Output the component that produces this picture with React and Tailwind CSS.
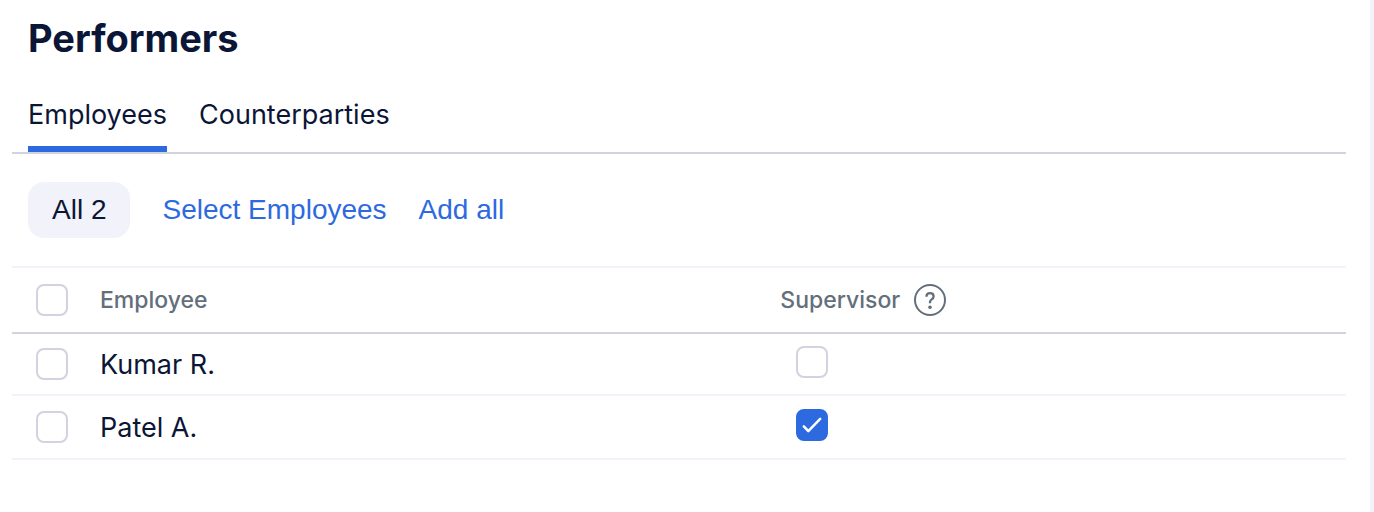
import { useState } from "react";

const EMPLOYEES = [
  { id: 1, name: "Kumar R.", supervisor: false },
  { id: 2, name: "Patel A.", supervisor: true },
];

const TABS = ["Employees", "Counterparties"];

function Checkbox({ label, checked, onChange }) {
  return (
    <span className="grid size-8 place-items-center">
      <input
        type="checkbox"
        aria-label={label}
        checked={checked}
        onChange={(e) => onChange(e.target.checked)}
        className="peer col-start-1 row-start-1 size-8 appearance-none rounded-lg border-2 border-[#d1d4e0] bg-white checked:border-[#2d6ae0] checked:bg-[#2d6ae0]"
      />
      <svg
        viewBox="0 0 32 32"
        className="pointer-events-none invisible col-start-1 row-start-1 size-8 peer-checked:visible"
        fill="none"
        stroke="white"
        strokeWidth="2.5"
        strokeLinecap="round"
        strokeLinejoin="round"
      >
        <path d="M7.8 17.3 12.3 22.1 24.2 9.8" />
      </svg>
    </span>
  );
}

export default function App() {
  const [tab, setTab] = useState("Employees");
  const [rows, setRows] = useState(EMPLOYEES);
  const [selected, setSelected] = useState([]);

  const toggleRow = (id, on) =>
    setSelected((prev) => (on ? [...prev, id] : prev.filter((x) => x !== id)));

  const setSupervisor = (id, on) =>
    setRows((prev) => prev.map((r) => (r.id === id ? { ...r, supervisor: on } : r)));

  return (
    <main className="min-h-screen border-r-4 border-[#f2f3fa] bg-white pt-4 pr-6 pl-3 font-['Inter',sans-serif] text-[#0b1637]">
      <h1 className="px-4 text-[38px] leading-11 font-bold">Performers</h1>

      <div role="tablist" className="mt-6 flex gap-8 border-b-2 border-[#d1d4e0] px-4 text-[27px]">
        {TABS.map((t) => (
          <button
            key={t}
            role="tab"
            aria-selected={tab === t}
            onClick={() => setTab(t)}
            className="h-17 border-b-6 border-transparent leading-15 aria-selected:border-[#2d6ae0]"
          >
            {t}
          </button>
        ))}
      </div>

      <div className="flex items-center gap-8 px-4 py-7 font-['Liberation_Sans',sans-serif] text-[28px]">
        <button className="h-14 rounded-2xl bg-[#f2f3fa] px-6">All {rows.length}</button>
        <button className="text-[#2d6ae0]">Select Employees</button>
        <button className="text-[#2d6ae0]">Add all</button>
      </div>

      <table className="w-full table-fixed border-separate border-spacing-0 border-t-2 border-[#f2f3fa] text-left">
        <thead className="text-[23px] text-[#636f7b]">
          <tr className="h-[66px]">
            <th className="w-22 border-b-2 border-[#d1d4e0] pl-6">
              <Checkbox
                label="Select all employees"
                checked={selected.length === rows.length}
                onChange={(on) => setSelected(on ? rows.map((r) => r.id) : [])}
              />
            </th>
            <th className="w-[51%] border-b-2 border-[#d1d4e0] font-medium">Employee</th>
            <th className="border-b-2 border-[#d1d4e0] font-medium">
              <div className="flex items-center gap-3.5">
                Supervisor
                <button aria-label="About supervisors">
                  <svg viewBox="0 0 32 32" className="size-8" fill="none" stroke="currentColor" strokeWidth="2">
                    <circle cx="16" cy="16" r="15" />
                    <path
                      d="M12.4 12.7c0-2.2 1.5-3.6 3.6-3.6s3.6 1.4 3.6 3.3c0 1.6-.9 2.3-1.9 3-1.1.8-1.7 1.3-1.7 2.6v1.2"
                      strokeWidth="2.3"
                    />
                    <circle cx="16" cy="23.2" r="1.8" fill="currentColor" stroke="none" />
                  </svg>
                </button>
              </div>
            </th>
          </tr>
        </thead>
        <tbody className="text-[27px]">
          {rows.map((r) => (
            <tr key={r.id} className="h-16 first:h-[62px]">
              <td className="border-b-2 border-[#f2f3fa] pl-6">
                <Checkbox
                  label={`Select ${r.name}`}
                  checked={selected.includes(r.id)}
                  onChange={(on) => toggleRow(r.id, on)}
                />
              </td>
              <td className="border-b-2 border-[#f2f3fa] pt-0.5">{r.name}</td>
              <td className="border-b-2 border-[#f2f3fa] pb-1 pl-4">
                <Checkbox
                  label={`${r.name} is a supervisor`}
                  checked={r.supervisor}
                  onChange={(on) => setSupervisor(r.id, on)}
                />
              </td>
            </tr>
          ))}
        </tbody>
      </table>
    </main>
  );
}
